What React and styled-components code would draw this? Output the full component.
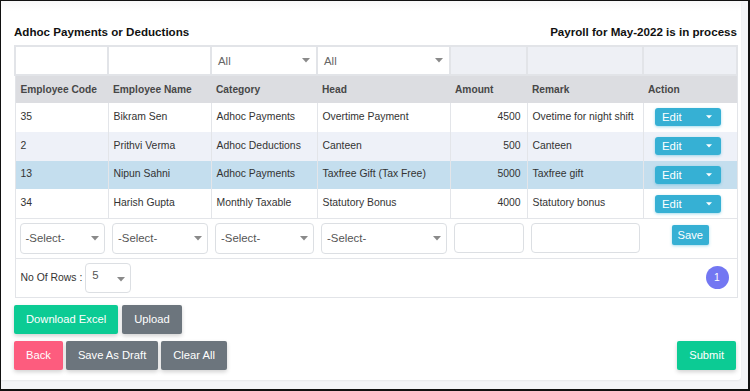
import React from "react";
import styled, { createGlobalStyle } from "styled-components";

const GlobalStyle = createGlobalStyle`
  html, body {
    margin: 0;
    padding: 0;
    background: #ffffff;
  }
  body {
    font-family: "Liberation Sans", Arial, sans-serif;
  }
`;

const rows = [
  { code: "35", name: "Bikram Sen", category: "Adhoc Payments", head: "Overtime Payment", amount: 4500, remark: "Ovetime for night shift", tone: "plain" },
  { code: "2", name: "Prithvi Verma", category: "Adhoc Deductions", head: "Canteen", amount: 500, remark: "Canteen", tone: "striped" },
  { code: "13", name: "Nipun Sahni", category: "Adhoc Payments", head: "Taxfree Gift (Tax Free)", amount: 5000, remark: "Taxfree gift", tone: "active" },
  { code: "34", name: "Harish Gupta", category: "Monthly Taxable", head: "Statutory Bonus", amount: 4000, remark: "Statutory bonus", tone: "plain" },
];

const columns = [93, 103, 106, 133, 77, 116, 94];

const Caret = ({ color = "#8a8a8a" }) => (
  <svg width="8" height="5" viewBox="0 0 8 5">
    <path d="M0 0 L8 0 L4 4.5 Z" fill={color} />
  </svg>
);

const App = () => {
  return (
    <>
      <GlobalStyle />
      <Frame>
        <Card>
          <TitleBar>
            <Title>Adhoc Payments or Deductions</Title>
            <Title>Payroll for May-2022 is in process</Title>
          </TitleBar>

          <Table>
            <colgroup>
              {columns.map((w, i) => (
                <col key={i} style={{ width: w }} />
              ))}
            </colgroup>
            <tbody>
              <FilterRow>
                <FilterCell $filled><FilterInput /></FilterCell>
                <FilterCell $filled><FilterInput /></FilterCell>
                <FilterCell $filled>
                  <FilterSelect>
                    <span>All</span>
                    <Caret />
                  </FilterSelect>
                </FilterCell>
                <FilterCell $filled>
                  <FilterSelect>
                    <span>All</span>
                    <Caret />
                  </FilterSelect>
                </FilterCell>
                <FilterCell />
                <FilterCell />
                <FilterCell />
              </FilterRow>

              <HeadRow>
                <Th>Employee Code</Th>
                <Th>Employee Name</Th>
                <Th>Category</Th>
                <Th>Head</Th>
                <Th>Amount</Th>
                <Th>Remark</Th>
                <Th>Action</Th>
              </HeadRow>

              {rows.map((r) => (
                <DataRow key={r.code} $tone={r.tone}>
                  <Td>{r.code}</Td>
                  <Td>{r.name}</Td>
                  <Td>{r.category}</Td>
                  <Td>{r.head}</Td>
                  <Td $right>{r.amount}</Td>
                  <Td>{r.remark}</Td>
                  <Td $center>
                    <EditGroup>
                      <EditLabel>Edit</EditLabel>
                      <EditToggle>
                        <Caret color="#ffffff" />
                      </EditToggle>
                    </EditGroup>
                  </Td>
                </DataRow>
              ))}

              <EntryRow>
                <EntryCell>
                  <SelectBox><span>-Select-</span><Caret /></SelectBox>
                </EntryCell>
                <EntryCell>
                  <SelectBox><span>-Select-</span><Caret /></SelectBox>
                </EntryCell>
                <EntryCell>
                  <SelectBox><span>-Select-</span><Caret /></SelectBox>
                </EntryCell>
                <EntryCell>
                  <SelectBox><span>-Select-</span><Caret /></SelectBox>
                </EntryCell>
                <EntryCell>
                  <TextBox />
                </EntryCell>
                <EntryCell>
                  <TextBox />
                </EntryCell>
                <EntryCell $center>
                  <SaveButton>Save</SaveButton>
                </EntryCell>
              </EntryRow>

              <FooterRow>
                <FooterCell colSpan={7}>
                  <FooterInner>
                    <RowsPicker>
                      <span>No Of Rows :</span>
                      <RowsSelect>
                        <span>5</span>
                        <Caret />
                      </RowsSelect>
                    </RowsPicker>
                    <PageDot>1</PageDot>
                  </FooterInner>
                </FooterCell>
              </FooterRow>
            </tbody>
          </Table>

          <ButtonRow>
            <Button $variant="green">Download Excel</Button>
            <Button $variant="gray">Upload</Button>
          </ButtonRow>
          <ButtonRow $spread>
            <Group>
              <Button $variant="pink">Back</Button>
              <Button $variant="gray">Save As Draft</Button>
              <Button $variant="gray">Clear All</Button>
            </Group>
            <Button $variant="green">Submit</Button>
          </ButtonRow>
        </Card>
      </Frame>
    </>
  );
};

export default App;

// Styled Components
const Frame = styled.div`
  width: 750px;
  height: 391px;
  box-sizing: border-box;
  border: 1px solid #111;
  border-bottom-width: 2px;
  border-right-width: 2px;
  background: #f3f4f7;
  overflow: hidden;
`;

const Card = styled.div`
  width: 740px;
  height: 379px;
  box-sizing: border-box;
  padding: 18px 4px 0 13px;
  background: linear-gradient(#f7f7f8 0, #ffffff 10px);
  border-radius: 0 0 4px 0;
  box-shadow: 0 1px 2px rgba(0, 0, 0, 0.05);
`;

const TitleBar = styled.div`
  display: flex;
  justify-content: space-between;
  align-items: center;
  height: 25px;
  padding-bottom: 1px;
`;

const Title = styled.div`
  font-size: 11.6px;
  font-weight: bold;
  color: #111;
`;

const Table = styled.table`
  width: 722px;
  table-layout: fixed;
  border-collapse: collapse;
  border: 1px solid #e2e4e8;
  font-size: 10.4px;
  color: #333;
`;

const FilterRow = styled.tr`
  height: 29px;
`;

const FilterCell = styled.td`
  padding: 0;
  border: 2px solid #e2e4e8;
  background: ${(p) => (p.$filled ? "#ffffff" : "#eef0f5")};
`;

const FilterInput = styled.div`
  height: 27px;
`;

const FilterSelect = styled.div`
  display: flex;
  align-items: center;
  justify-content: space-between;
  height: 27px;
  padding: 0 6px 0 6px;
  font-size: 11.4px;
  color: #666;
`;

const HeadRow = styled.tr`
  height: 28px;
  background: #dcdde1;
`;

const Th = styled.th`
  padding: 0 5px;
  text-align: left;
  font-size: 10.2px;
  font-weight: bold;
  color: #474747;
  white-space: nowrap;
  overflow: hidden;
`;

const toneColors = {
  plain: "#ffffff",
  striped: "#eef1f8",
  active: "#c4deee",
};

const DataRow = styled.tr`
  height: 28.8px;
  background: ${(p) => toneColors[p.$tone]};
`;

const Td = styled.td`
  padding: 0 6px 2px 5px;
  border-left: 1px solid #e3e5e9;
  border-right: 1px solid #e3e5e9;
  text-align: ${(p) => (p.$right ? "right" : p.$center ? "center" : "left")};
  white-space: nowrap;
  overflow: hidden;
`;

const EditGroup = styled.div`
  display: inline-flex;
  align-items: center;
  width: 66px;
  height: 18px;
  margin-top: 2px;
  margin-left: -3px;
  border-radius: 3px;
  background: #36b0d4;
  box-shadow: 0 1px 3px rgba(54, 176, 212, 0.45);
  color: #ffffff;
  font-size: 11.4px;
`;

const EditLabel = styled.span`
  flex: 1;
  padding-left: 7px;
  text-align: left;
`;

const EditToggle = styled.span`
  display: flex;
  align-items: center;
  justify-content: center;
  width: 24px;
  height: 100%;
  svg {
    width: 6px;
    height: 4px;
  }
`;

const EntryRow = styled.tr`
  height: 39px;
  background: #ffffff;
  border-top: 1px solid #e3e5e9;
`;

const EntryCell = styled.td`
  padding: 4px 3px 4px 4px;
  text-align: ${(p) => (p.$center ? "center" : "left")};
  vertical-align: top;
`;

const SelectBox = styled.div`
  display: flex;
  align-items: center;
  justify-content: space-between;
  box-sizing: border-box;
  height: 31px;
  padding: 0 5px 0 5px;
  border: 1px solid #dcdfe3;
  border-radius: 4px;
  font-size: 11.4px;
  color: #555;
`;

const TextBox = styled.div`
  box-sizing: border-box;
  height: 30px;
  border: 1px solid #dcdfe3;
  border-radius: 4px;
`;

const SaveButton = styled.button`
  height: 20px;
  margin-top: 2px;
  padding: 0 6px;
  border: none;
  border-radius: 2px;
  background: #36b0d4;
  color: #ffffff;
  font-family: "Liberation Sans", Arial, sans-serif;
  font-size: 11.2px;
  box-shadow: 0 1px 3px rgba(54, 176, 212, 0.45);
`;

const FooterRow = styled.tr`
  height: 39px;
  border-top: 1px solid #e3e5e9;
`;

const FooterCell = styled.td`
  padding: 0 8px 0 5px;
`;

const FooterInner = styled.div`
  display: flex;
  align-items: center;
  justify-content: space-between;
`;

const RowsPicker = styled.div`
  display: flex;
  align-items: center;
  gap: 3px;
  font-size: 10.4px;
  color: #333;
`;

const RowsSelect = styled.div`
  display: flex;
  align-items: center;
  justify-content: space-between;
  box-sizing: border-box;
  width: 46px;
  height: 30px;
  padding: 0 5px 6px 6px;
  border: 1px solid #dcdfe3;
  border-radius: 4px;
  font-size: 11.4px;
  color: #555;
  svg {
    margin-top: 10px;
  }
`;

const PageDot = styled.div`
  display: flex;
  align-items: center;
  justify-content: center;
  width: 23px;
  height: 23px;
  border-radius: 50%;
  background: #7377f2;
  color: #ffffff;
  font-size: 10.4px;
`;

const ButtonRow = styled.div`
  display: flex;
  justify-content: ${(p) => (p.$spread ? "space-between" : "flex-start")};
  gap: 4px;
  margin-top: 7px;
  width: 722px;
`;

const Group = styled.div`
  display: flex;
  gap: 3px;
`;

const buttonColors = {
  green: "#0ccb94",
  gray: "#6c757d",
  pink: "#fd5c7e",
};

const Button = styled.button`
  height: 29px;
  padding: 0 12px;
  border: none;
  border-radius: 2px;
  background: ${(p) => buttonColors[p.$variant]};
  color: #ffffff;
  font-family: "Liberation Sans", Arial, sans-serif;
  font-size: 11.2px;
  box-shadow: 0 2px 4px rgba(0, 0, 0, 0.18);
`;
